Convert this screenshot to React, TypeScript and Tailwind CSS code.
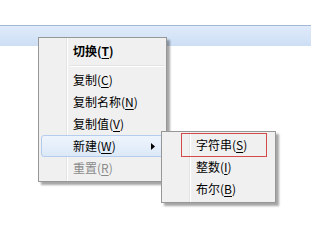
import React from 'react';

type Item = { label: string; key: string; bold?: boolean; disabled?: boolean; active?: boolean; sub?: boolean };

const mainItems: (Item | 'sep')[] = [
  { label: '切换', key: 'T', bold: true },
  'sep',
  { label: '复制', key: 'C' },
  { label: '复制名称', key: 'N' },
  { label: '复制值', key: 'V' },
  { label: '新建', key: 'W', active: true, sub: true },
  { label: '重置', key: 'R', disabled: true },
];

const newItems: Item[] = [
  { label: '字符串', key: 'S' },
  { label: '整数', key: 'I' },
  { label: '布尔', key: 'B' },
];

function MenuRow({ item, boxed }: { item: Item; boxed?: boolean }) {
  return (
    <div
      className={
        'relative flex h-[22px] items-center pl-[31px] pr-[8px] rounded-[3px] border ' +
        (item.active
          ? 'border-[#b4cdee] bg-gradient-to-b from-[#eef4fc] to-[#dde9f8]'
          : 'border-transparent')
      }
    >
      <span
        className={
          'text-[12px] leading-none whitespace-nowrap ' +
          (item.bold ? 'font-bold ' : '') +
          (item.disabled ? 'text-[#8a8a8a]' : 'text-[#000]')
        }
      >
        {item.label}(<span className="underline underline-offset-2">{item.key}</span>)
      </span>
      {item.sub && (
        <svg className="absolute right-[8px] top-[7px]" width="4" height="7" viewBox="0 0 4 7">
          <path d="M0 0 L4 3.5 L0 7 Z" fill="#000" />
        </svg>
      )}
      {boxed && (
        <div className="absolute left-[16px] -top-[2px] h-[24px] w-[86px] border border-[#d24a4a]" />
      )}
    </div>
  );
}

function Gutter() {
  return (
    <div className="absolute left-[27px] top-0 bottom-0 flex">
      <div className="w-px bg-[#e2e3e3]" />
      <div className="w-px bg-white" />
    </div>
  );
}

export default function App() {
  return (
    <div
      className="relative w-[311px] h-[251px] overflow-hidden bg-white pt-[25px]"
      style={{ fontFamily: '"Noto Sans CJK SC", "Liberation Sans", sans-serif' }}
    >
      <div className="h-[21px] border-t border-[#a3b9d3] bg-gradient-to-b from-[#dfeafa] to-[#cddff5]" />

      {/* context menu */}
      <div className="absolute left-[38px] top-[37px] w-[129px] border border-[#979797] bg-[#f0f0f0] p-[2px] shadow-[3px_3px_2px_rgba(0,0,0,0.35)]">
        <Gutter />
        {mainItems.map((it, i) =>
          it === 'sep' ? (
            <div key={i} className="flex h-[7px] flex-col justify-center pl-[29px]">
              <div className="h-px bg-[#e2e3e3]" />
              <div className="h-px bg-white" />
            </div>
          ) : (
            <MenuRow key={i} item={it} />
          )
        )}
      </div>

      {/* submenu */}
      <div className="absolute left-[161px] top-[131px] w-[115px] border border-[#979797] bg-[#f0f0f0] p-[2px] shadow-[3px_3px_2px_rgba(0,0,0,0.35)]">
        <Gutter />
        {newItems.map((it, i) => (
          <MenuRow key={i} item={it} boxed={i === 0} />
        ))}
      </div>
    </div>
  );
}
